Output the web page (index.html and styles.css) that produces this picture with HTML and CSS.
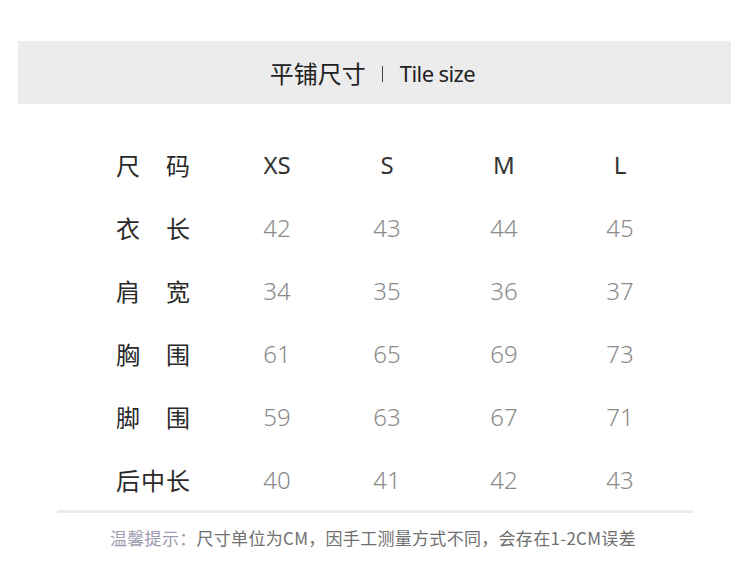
FILE: index.html
```html
<!DOCTYPE html>
<html lang="zh-CN">
<head>
<meta charset="utf-8">
<title>平铺尺寸</title>
<link rel="stylesheet" href="styles.css">
</head>
<body>
<div class="page">
  <div class="banner">
    <span class="title-cn">平铺尺寸</span>
    <span class="sep"></span>
    <span class="title-en">Tile size</span>
  </div>
  <div class="table">
    <div class="row head">
      <div class="label"><span>尺</span><span>码</span></div>
      <div class="cell">XS</div><div class="cell">S</div><div class="cell">M</div><div class="cell">L</div>
    </div>
    <div class="row">
      <div class="label"><span>衣</span><span>长</span></div>
      <div class="cell">42</div><div class="cell">43</div><div class="cell">44</div><div class="cell">45</div>
    </div>
    <div class="row">
      <div class="label"><span>肩</span><span>宽</span></div>
      <div class="cell">34</div><div class="cell">35</div><div class="cell">36</div><div class="cell">37</div>
    </div>
    <div class="row">
      <div class="label"><span>胸</span><span>围</span></div>
      <div class="cell">61</div><div class="cell">65</div><div class="cell">69</div><div class="cell">73</div>
    </div>
    <div class="row">
      <div class="label"><span>脚</span><span>围</span></div>
      <div class="cell">59</div><div class="cell">63</div><div class="cell">67</div><div class="cell">71</div>
    </div>
    <div class="row">
      <div class="label"><span>后</span><span>中</span><span>长</span></div>
      <div class="cell">40</div><div class="cell">41</div><div class="cell">42</div><div class="cell">43</div>
    </div>
  </div>
  <div class="divider"></div>
  <p class="note"><span class="note-key">温馨提示：</span>尺寸单位为CM，因手工测量方式不同，会存在1-2CM误差</p>
</div>
</body>
</html>
```
FILE: styles.css
```css
html, body {
  margin: 0;
  padding: 0;
  background: #ffffff;
}
body {
  font-family: "Noto Sans", "Noto Sans CJK SC", sans-serif;
  color: #333;
}
.page {
  width: 750px;
  height: 567px;
  padding-top: 41px;
  box-sizing: border-box;
  overflow: hidden;
}
.banner {
  margin-left: 18px;
  width: 713px;
  height: 63px;
  background: #ececec;
  display: flex;
  align-items: center;
  justify-content: center;
}
.title-cn {
  font-family: "Noto Sans CJK SC", sans-serif;
  font-size: 24px;
  color: #222;
  margin-left: -4px;
}
.sep {
  width: 1px;
  height: 16px;
  background: #444;
  margin: 2px 17px 0 16px;
}
.title-en {
  font-family: "Noto Sans", sans-serif;
  font-size: 22px;
  color: #222;
  letter-spacing: -0.6px;
  padding-top: 1px;
}
.table {
  margin-top: 29px;
  margin-left: 116px;
}
.row {
  display: grid;
  grid-template-columns: 74px 30px 114px 106px 128px 104px;
  height: 63px;
  align-items: center;
}
.label {
  grid-column: 1;
  display: flex;
  justify-content: space-between;
  font-family: "Noto Sans CJK SC", sans-serif;
  font-size: 24px;
  color: #2a2a2a;
  line-height: 1;
}
.cell {
  text-align: center;
  font-family: "Noto Sans", sans-serif;
  font-size: 24px;
  font-weight: 300;
  color: #8a8a8a;
  line-height: 1;
}
.label + .cell {
  grid-column: 3;
}
.head .cell {
  color: #333;
  font-weight: 400;
}
.divider {
  margin-left: 57px;
  width: 636px;
  height: 3px;
  background: #ebebeb;
  margin-top: -1px;
}
.note {
  margin: 15px 0 0 110px;
  font-family: "Noto Sans CJK SC", sans-serif;
  font-size: 17px;
  line-height: 20px;
  color: #6f6f6f;
  letter-spacing: 0.3px;
}
.note-key {
  color: #9d9bb0;
}
```
